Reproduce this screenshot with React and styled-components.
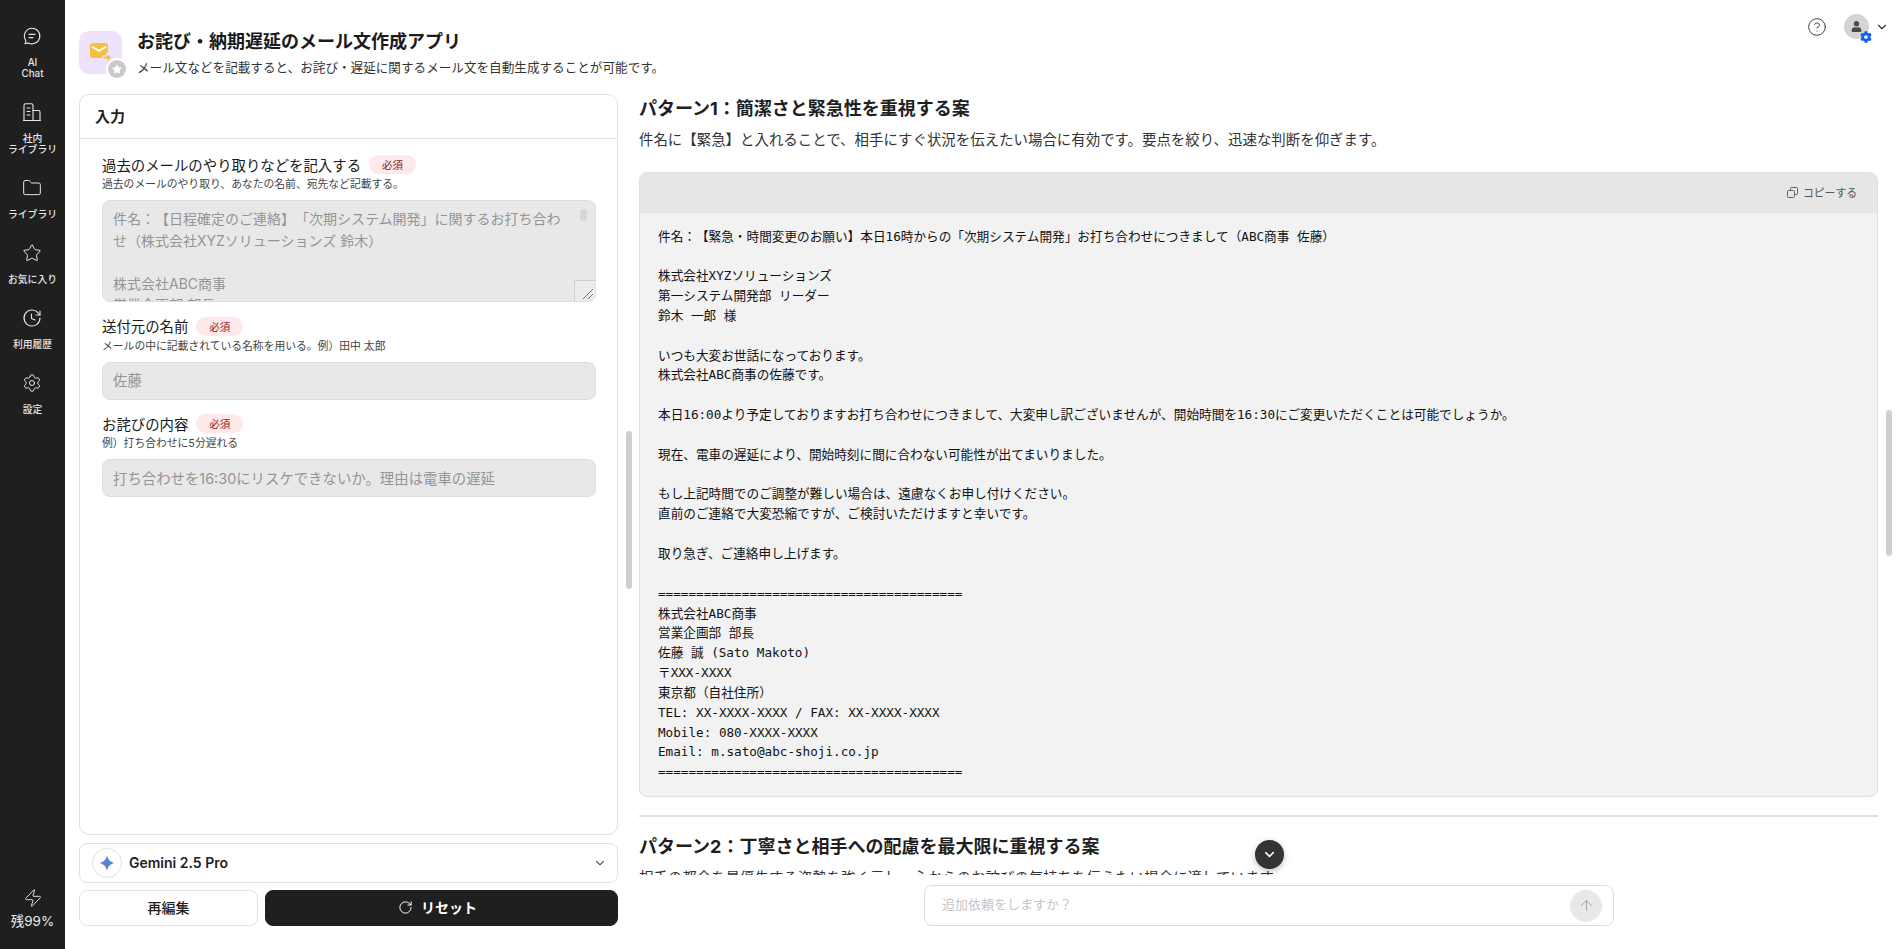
import styled, { createGlobalStyle } from "styled-components";
import {
  ArrowUp,
  ChevronDown,
  CircleHelp,
  Folder,
  RotateCw,
  Settings,
  Star,
  Zap,
} from "lucide-react";
import { FaCog, FaStar, FaUser } from "react-icons/fa";

const GlobalStyle = createGlobalStyle`
  html, body { margin: 0; padding: 0; height: 100%; background: #fff; }
  body {
    font-family: Inter, "Noto Sans CJK JP", sans-serif;
    color: #1f1f1f;
    text-spacing-trim: space-all;
  }
  * { box-sizing: border-box; }
`;

const Page = styled.div`
  display: flex;
  width: 100%;
  height: 949px;
  overflow: hidden;
`;

const Sidebar = styled.nav`
  width: 65px;
  flex: none;
  background: #1f1f1f;
  display: flex;
  flex-direction: column;
  align-items: center;
  justify-content: space-between;
  padding: 26px 0 20px;
`;

const NavList = styled.div`
  display: flex;
  flex-direction: column;
  gap: 23px;
`;

const NavItem = styled.div`
  display: flex;
  flex-direction: column;
  align-items: center;
  gap: 11px;
  color: #e6e6e6;
  font-size: 9.8px;
  font-weight: 500;
  line-height: 11px;
  text-align: center;
  white-space: pre-line;
  svg { display: block; }
`;

const Credit = styled.div`
  display: flex;
  flex-direction: column;
  align-items: center;
  gap: 5px;
  color: #ececec;
  font-size: 13.5px;
  line-height: 16px;
`;

const Main = styled.main`
  flex: 1;
  min-width: 0;
  position: relative;
  display: flex;
  flex-direction: column;
  padding: 0 24px 23px 14px;
`;

const TopRow = styled.header`
  height: 94px;
  flex: none;
  display: flex;
  justify-content: space-between;
  align-items: flex-start;
`;

const AppInfo = styled.div`
  display: flex;
  gap: 15px;
  margin-top: 31px;
`;

const AppIcon = styled.div`
  position: relative;
  width: 43px;
  height: 43px;
  border-radius: 10px;
  background: #efe3fb;
  display: flex;
  align-items: center;
  justify-content: center;
`;

const AppBadge = styled.span`
  position: absolute;
  right: -6px;
  bottom: -6px;
  width: 22px;
  height: 22px;
  border-radius: 50%;
  background: #c9c9c9;
  border: 2px solid #fff;
  color: #fff;
  font-size: 10px;
  display: flex;
  align-items: center;
  justify-content: center;
`;

const AppTitle = styled.h1`
  margin: 0;
  font-size: 18px;
  font-weight: 700;
  line-height: 22px;
  color: #1a1a1a;
`;

const AppDesc = styled.p`
  margin: 5px 0 0;
  font-size: 12.6px;
  line-height: 20px;
  color: #333;
`;

const UserTools = styled.div`
  display: flex;
  align-items: center;
  margin-top: 14px;
  margin-right: -11px;
  color: #333;
  svg { display: block; }
`;

const Avatar = styled.div`
  position: relative;
  width: 25px;
  height: 25px;
  margin-left: 17px;
  margin-right: 6px;
  border-radius: 50%;
  background: #d4d4d4;
  color: #4a4a4a;
  font-size: 11px;
  display: flex;
  align-items: center;
  justify-content: center;
`;

const AvatarGear = styled.span`
  position: absolute;
  right: -3px;
  bottom: -4px;
  color: #1260ee;
  font-size: 12px;
  line-height: 0;
`;

const Columns = styled.div`
  flex: 1;
  min-height: 0;
  display: flex;
  gap: 21px;
`;

const LeftColumn = styled.section`
  width: 539px;
  flex: none;
  display: flex;
  flex-direction: column;
`;

const Panel = styled.div`
  flex: 1;
  min-height: 0;
  border: 1px solid #e0e0e0;
  border-radius: 10px;
  overflow: hidden;
`;

const PanelHead = styled.div`
  height: 44px;
  padding: 0 15px 3px;
  border-bottom: 1px solid #e0e0e0;
  display: flex;
  align-items: center;
  font-size: 15px;
  font-weight: 700;
`;

const Fields = styled.div`
  padding: 16px 21px 0 22px;
  display: flex;
  flex-direction: column;
  gap: 14.5px;
`;

const LabelRow = styled.div`
  display: flex;
  align-items: center;
  gap: 8px;
  height: 19px;
  font-size: 14.4px;
  color: #1a1a1a;
`;

const LabelText = styled.span`
  margin-top: -1px;
`;

const Required = styled.span`
  width: 47px;
  height: 19px;
  border-radius: 10px;
  background: #fde8ea;
  color: #8a1c1c;
  font-size: 10.5px;
  display: flex;
  align-items: center;
  justify-content: center;
`;

const Help = styled.div`
  margin: 3px 0 7px;
  font-size: 10.8px;
  line-height: 16px;
  color: #444;
`;

const TextBox = styled.div`
  position: relative;
  height: 102px;
  padding: 7px 24px 0 10px;
  border: 1px solid #dedede;
  border-radius: 8px;
  background: #e8e8e8;
  color: #959595;
  font-size: 14px;
  line-height: 21.6px;
  white-space: pre-wrap;
  overflow: hidden;
`;

const InputBox = styled.div`
  height: 38px;
  padding: 0 10px 2px;
  border: 1px solid #dedede;
  border-radius: 8px;
  background: #e8e8e8;
  color: #959595;
  font-size: 14.4px;
  display: flex;
  align-items: center;
`;

const BoxThumb = styled.span`
  position: absolute;
  top: 8px;
  right: 8px;
  width: 7px;
  height: 12px;
  border-radius: 4px;
  background: #d6d6d6;
`;

const Resizer = styled.span`
  position: absolute;
  right: 0;
  bottom: 0;
  width: 21px;
  height: 21px;
  background: #ececec;
  border: 1px solid #cfcfcf;
  border-right: 0;
  border-bottom: 0;
  color: #666;
  svg { display: block; position: absolute; right: 1px; bottom: 1px; }
`;

const ModelSelect = styled.div`
  flex: none;
  height: 40px;
  margin-top: 8px;
  padding: 0 10px 1px 12px;
  border: 1px solid #e0e0e0;
  border-radius: 8px;
  display: flex;
  align-items: center;
  gap: 7px;
  font-size: 14px;
  font-weight: 600;
  color: #222;
`;

const ModelLogo = styled.span`
  width: 30px;
  height: 30px;
  border: 1px solid #e0e0e0;
  border-radius: 50%;
  display: flex;
  align-items: center;
  justify-content: center;
`;

const ModelName = styled.span`
  flex: 1;
`;

const ButtonRow = styled.div`
  flex: none;
  margin-top: 7px;
  display: flex;
  gap: 7px;
`;

const Button = styled.button`
  height: 36px;
  padding: 0 ${(p) => (p.$primary ? "8px" : "0")} 2px 0;
  flex: ${(p) => (p.$primary ? 1 : "none")};
  width: ${(p) => (p.$primary ? "auto" : "179px")};
  border: 1px solid ${(p) => (p.$primary ? "#1f1f1f" : "#e0e0e0")};
  border-radius: 8px;
  background: ${(p) => (p.$primary ? "#1f1f1f" : "#fff")};
  color: ${(p) => (p.$primary ? "#fff" : "#222")};
  font-family: inherit;
  font-size: 14px;
  font-weight: ${(p) => (p.$primary ? 700 : 500)};
  display: flex;
  align-items: center;
  justify-content: center;
  gap: 8px;
`;

const RightColumn = styled.section`
  flex: 1;
  min-width: 0;
  display: flex;
  flex-direction: column;
`;

const Results = styled.div`
  flex: 1;
  min-height: 0;
  overflow: hidden;
`;

const PatternTitle = styled.h2`
  margin: 0;
  padding-top: 1px;
  font-size: 18px;
  font-weight: 700;
  line-height: 27px;
  color: #1f1f1f;
`;

const PatternDesc = styled.p`
  margin: 7px 0 21px;
  font-size: 14.45px;
  line-height: 22px;
  color: #333;
`;

const MailBox = styled.div`
  border: 1px solid #e0e0e0;
  border-radius: 8px;
  background: #f2f2f2;
  overflow: hidden;
`;

const MailHead = styled.div`
  height: 40px;
  padding: 0 20px 2px;
  background: #e6e6e6;
  display: flex;
  align-items: center;
  justify-content: flex-end;
  gap: 5px;
  font-size: 10.8px;
  color: #555;
`;

const MailBody = styled.pre`
  margin: 0;
  padding: 13.5px 18px 13.5px;
  font-family: "DejaVu Sans Mono", "Noto Sans CJK JP", monospace;
  font-size: 12.65px;
  line-height: 19.85px;
  color: #111;
`;

const Divider = styled.hr`
  margin: 18px 0 15px;
  border: 0;
  border-top: 2px solid #e2e2e2;
`;

const ChatDock = styled.div`
  flex: none;
  position: relative;
  width: 690px;
  height: 41px;
  margin: 10px 0 0 285px;
  padding: 0 11px 0 17px;
  border: 1px solid #dedede;
  border-radius: 8px;
  display: flex;
  align-items: center;
  justify-content: space-between;
  font-size: 13px;
  color: #c6c6c6;
`;

const Placeholder = styled.span`
  margin-top: -4px;
`;

const SendButton = styled.span`
  width: 32px;
  height: 32px;
  border-radius: 50%;
  background: #e8e8e8;
  color: #a8a8a8;
  display: flex;
  align-items: center;
  justify-content: center;
`;

const ScrollDown = styled.span`
  position: absolute;
  top: -46px;
  left: 330px;
  width: 29px;
  height: 29px;
  border-radius: 50%;
  background: #333;
  color: #fff;
  box-shadow: 0 2px 6px rgba(0, 0, 0, 0.25);
  display: flex;
  align-items: center;
  justify-content: center;
`;

const ScrollThumb = styled.span`
  position: absolute;
  left: ${(p) => p.$left}px;
  top: ${(p) => p.$top}px;
  width: 6px;
  height: ${(p) => p.$height}px;
  border-radius: 3px;
  background: #cfcfcf;
`;

const navItems = [
  { icon: <ChatIcon />, label: "AI\nChat" },
  { icon: <BuildingIcon />, label: "社内\nライブラリ" },
  { icon: <Folder size={20} strokeWidth={1.2} />, label: "ライブラリ" },
  { icon: <Star size={20} strokeWidth={1.2} />, label: "お気に入り" },
  { icon: <HistoryIcon />, label: "利用履歴" },
  { icon: <Settings size={20} strokeWidth={1.2} />, label: "設定" },
];

const quotedMail = `件名：【日程確定のご連絡】「次期システム開発」に関するお打ち合わせ（株式会社XYZソリューションズ 鈴木）

株式会社ABC商事
営業企画部 部長`;

const mailText = `件名：【緊急・時間変更のお願い】本日16時からの「次期システム開発」お打ち合わせにつきまして（ABC商事 佐藤）

株式会社XYZソリューションズ
第一システム開発部 リーダー
鈴木 一郎 様

いつも大変お世話になっております。
株式会社ABC商事の佐藤です。

本日16:00より予定しておりますお打ち合わせにつきまして、大変申し訳ございませんが、開始時間を16:30にご変更いただくことは可能でしょうか。

現在、電車の遅延により、開始時刻に間に合わない可能性が出てまいりました。

もし上記時間でのご調整が難しい場合は、遠慮なくお申し付けください。
直前のご連絡で大変恐縮ですが、ご検討いただけますと幸いです。

取り急ぎ、ご連絡申し上げます。

========================================
株式会社ABC商事
営業企画部 部長
佐藤 誠 (Sato Makoto)
〒XXX-XXXX
東京都（自社住所）
TEL: XX-XXXX-XXXX / FAX: XX-XXXX-XXXX
Mobile: 080-XXXX-XXXX
Email: m.sato@abc-shoji.co.jp
========================================`;

function ChatIcon() {
  return (
    <svg width="20" height="20" viewBox="0 0 20 20" fill="none" stroke="currentColor" strokeWidth="1.1" strokeLinecap="round" strokeLinejoin="round">
      <path d="M10 2.2a7.8 7.8 0 1 1-3.6 14.7l-3.4.9.9-3.2A7.8 7.8 0 0 1 10 2.2Z" />
      <path d="M7 8.4h6M7 11.6h4" />
    </svg>
  );
}

function BuildingIcon() {
  return (
    <svg width="20" height="20" viewBox="0 0 20 20" fill="none" stroke="currentColor" strokeWidth="1.1" strokeLinecap="round" strokeLinejoin="round">
      <path d="M2 18.5V3.2c0-.9.6-1.5 1.5-1.5h6c.9 0 1.5.6 1.5 1.5v15.3" />
      <path d="M11 8.5h5.5c.9 0 1.5.6 1.5 1.5v8.5M1.5 18.5h17" />
      <path d="M5 6h3M5 9.5h3M5 13h3" />
    </svg>
  );
}

function HistoryIcon() {
  return (
    <svg width="20" height="20" viewBox="0 0 20 20" fill="none" stroke="currentColor" strokeWidth="1.1" strokeLinecap="round" strokeLinejoin="round">
      <path d="M18 10a8 8 0 1 1-2.2-5.5L18 7" />
      <path d="M18 3v4h-4" />
      <path d="M9.5 6v4.5l3.5 1.5" />
    </svg>
  );
}

function MailIcon() {
  return (
    <svg width="24" height="22" viewBox="0 0 24 22">
      <rect x="1" y="1" width="18" height="15" rx="3" fill="#f0c240" />
      <path d="M3.5 5l6.5 4 6.5-4" fill="none" stroke="#fff" strokeWidth="1.8" strokeLinecap="round" />
      <path d="M14 14h4v-3.5l5 5-5 5V17h-4z" fill="#f0c240" stroke="#efe3fb" strokeWidth="1.2" strokeLinejoin="round" />
    </svg>
  );
}

function GeminiIcon() {
  return (
    <svg width="16" height="16" viewBox="0 0 16 16">
      <defs>
        <linearGradient id="gem" x1="0" y1="1" x2="1" y2="0">
          <stop offset="0" stopColor="#9168c0" />
          <stop offset="0.5" stopColor="#5684d1" />
          <stop offset="1" stopColor="#1ba1e3" />
        </linearGradient>
      </defs>
      <path d="M8 0c.6 4.4 3.4 7.3 8 8-4.6.7-7.4 3.6-8 8-.6-4.4-3.4-7.3-8-8 4.6-.7 7.4-3.6 8-8Z" fill="url(#gem)" />
    </svg>
  );
}

function CopyIcon() {
  return (
    <svg width="11" height="11" viewBox="0 0 11 11" fill="none" stroke="currentColor" strokeWidth="0.9">
      <rect x="0.5" y="3.5" width="7" height="7" rx="1" />
      <path d="M3.5 3.5V1.5a1 1 0 0 1 1-1h5a1 1 0 0 1 1 1v5a1 1 0 0 1-1 1h-2" />
    </svg>
  );
}

function ResizeGrip() {
  return (
    <svg width="12" height="12" viewBox="0 0 12 12" fill="none" stroke="currentColor" strokeWidth="0.9">
      <path d="M1 11 11 1M6 11l5-5" />
    </svg>
  );
}

function Field({ label, help, children }) {
  return (
    <div>
      <LabelRow>
        <LabelText>{label}</LabelText>
        <Required>必須</Required>
      </LabelRow>
      <Help>{help}</Help>
      {children}
    </div>
  );
}

export default function App() {
  return (
    <>
      <GlobalStyle />
      <Page>
        <Sidebar>
          <NavList>
            {navItems.map((item) => (
              <NavItem key={item.label}>
                {item.icon}
                <span>{item.label}</span>
              </NavItem>
            ))}
          </NavList>
          <Credit>
            <Zap size={20} strokeWidth={1.1} />
            残99%
          </Credit>
        </Sidebar>

        <Main>
          <TopRow>
            <AppInfo>
              <AppIcon>
                <MailIcon />
                <AppBadge>
                  <FaStar />
                </AppBadge>
              </AppIcon>
              <div>
                <AppTitle>お詫び・納期遅延のメール文作成アプリ</AppTitle>
                <AppDesc>メール文などを記載すると、お詫び・遅延に関するメール文を自動生成することが可能です。</AppDesc>
              </div>
            </AppInfo>
            <UserTools>
              <CircleHelp size={20} strokeWidth={1.1} />
              <Avatar>
                <FaUser />
                <AvatarGear>
                  <FaCog />
                </AvatarGear>
              </Avatar>
              <ChevronDown size={14} strokeWidth={2} />
            </UserTools>
          </TopRow>

          <Columns>
            <LeftColumn>
              <Panel>
                <PanelHead>入力</PanelHead>
                <Fields>
                  <Field label="過去のメールのやり取りなどを記入する" help="過去のメールのやり取り、あなたの名前、宛先など記載する。">
                    <TextBox>
                      {quotedMail}
                      <BoxThumb />
                      <Resizer>
                        <ResizeGrip />
                      </Resizer>
                    </TextBox>
                  </Field>
                  <Field label="送付元の名前" help="メールの中に記載されている名称を用いる。例）田中 太郎">
                    <InputBox>佐藤</InputBox>
                  </Field>
                  <Field label="お詫びの内容" help="例）打ち合わせに5分遅れる">
                    <InputBox>打ち合わせを16:30にリスケできないか。理由は電車の遅延</InputBox>
                  </Field>
                </Fields>
              </Panel>
              <ModelSelect>
                <ModelLogo>
                  <GeminiIcon />
                </ModelLogo>
                <ModelName>Gemini 2.5 Pro</ModelName>
                <ChevronDown size={14} strokeWidth={1.8} />
              </ModelSelect>
              <ButtonRow>
                <Button>再編集</Button>
                <Button $primary>
                  <RotateCw size={15} strokeWidth={1.6} />
                  リセット
                </Button>
              </ButtonRow>
            </LeftColumn>

            <RightColumn>
              <Results>
                <PatternTitle>パターン1：簡潔さと緊急性を重視する案</PatternTitle>
                <PatternDesc>件名に【緊急】と入れることで、相手にすぐ状況を伝えたい場合に有効です。要点を絞り、迅速な判断を仰ぎます。</PatternDesc>
                <MailBox>
                  <MailHead>
                    <CopyIcon />
                    コピーする
                  </MailHead>
                  <MailBody>{mailText}</MailBody>
                </MailBox>
                <Divider />
                <PatternTitle>パターン2：丁寧さと相手への配慮を最大限に重視する案</PatternTitle>
                <PatternDesc>相手の都合を最優先する姿勢を強く示し、心からのお詫びの気持ちを伝えたい場合に適しています。</PatternDesc>
              </Results>
              <ChatDock>
                <Placeholder>追加依頼をしますか？</Placeholder>
                <SendButton>
                  <ArrowUp size={17} strokeWidth={1.4} />
                </SendButton>
                <ScrollDown>
                  <ChevronDown size={15} strokeWidth={2.4} />
                </ScrollDown>
              </ChatDock>
            </RightColumn>
          </Columns>

          <ScrollThumb $left={561} $top={431} $height={158} />
          <ScrollThumb $left={1821} $top={410} $height={146} />
        </Main>
      </Page>
    </>
  );
}
